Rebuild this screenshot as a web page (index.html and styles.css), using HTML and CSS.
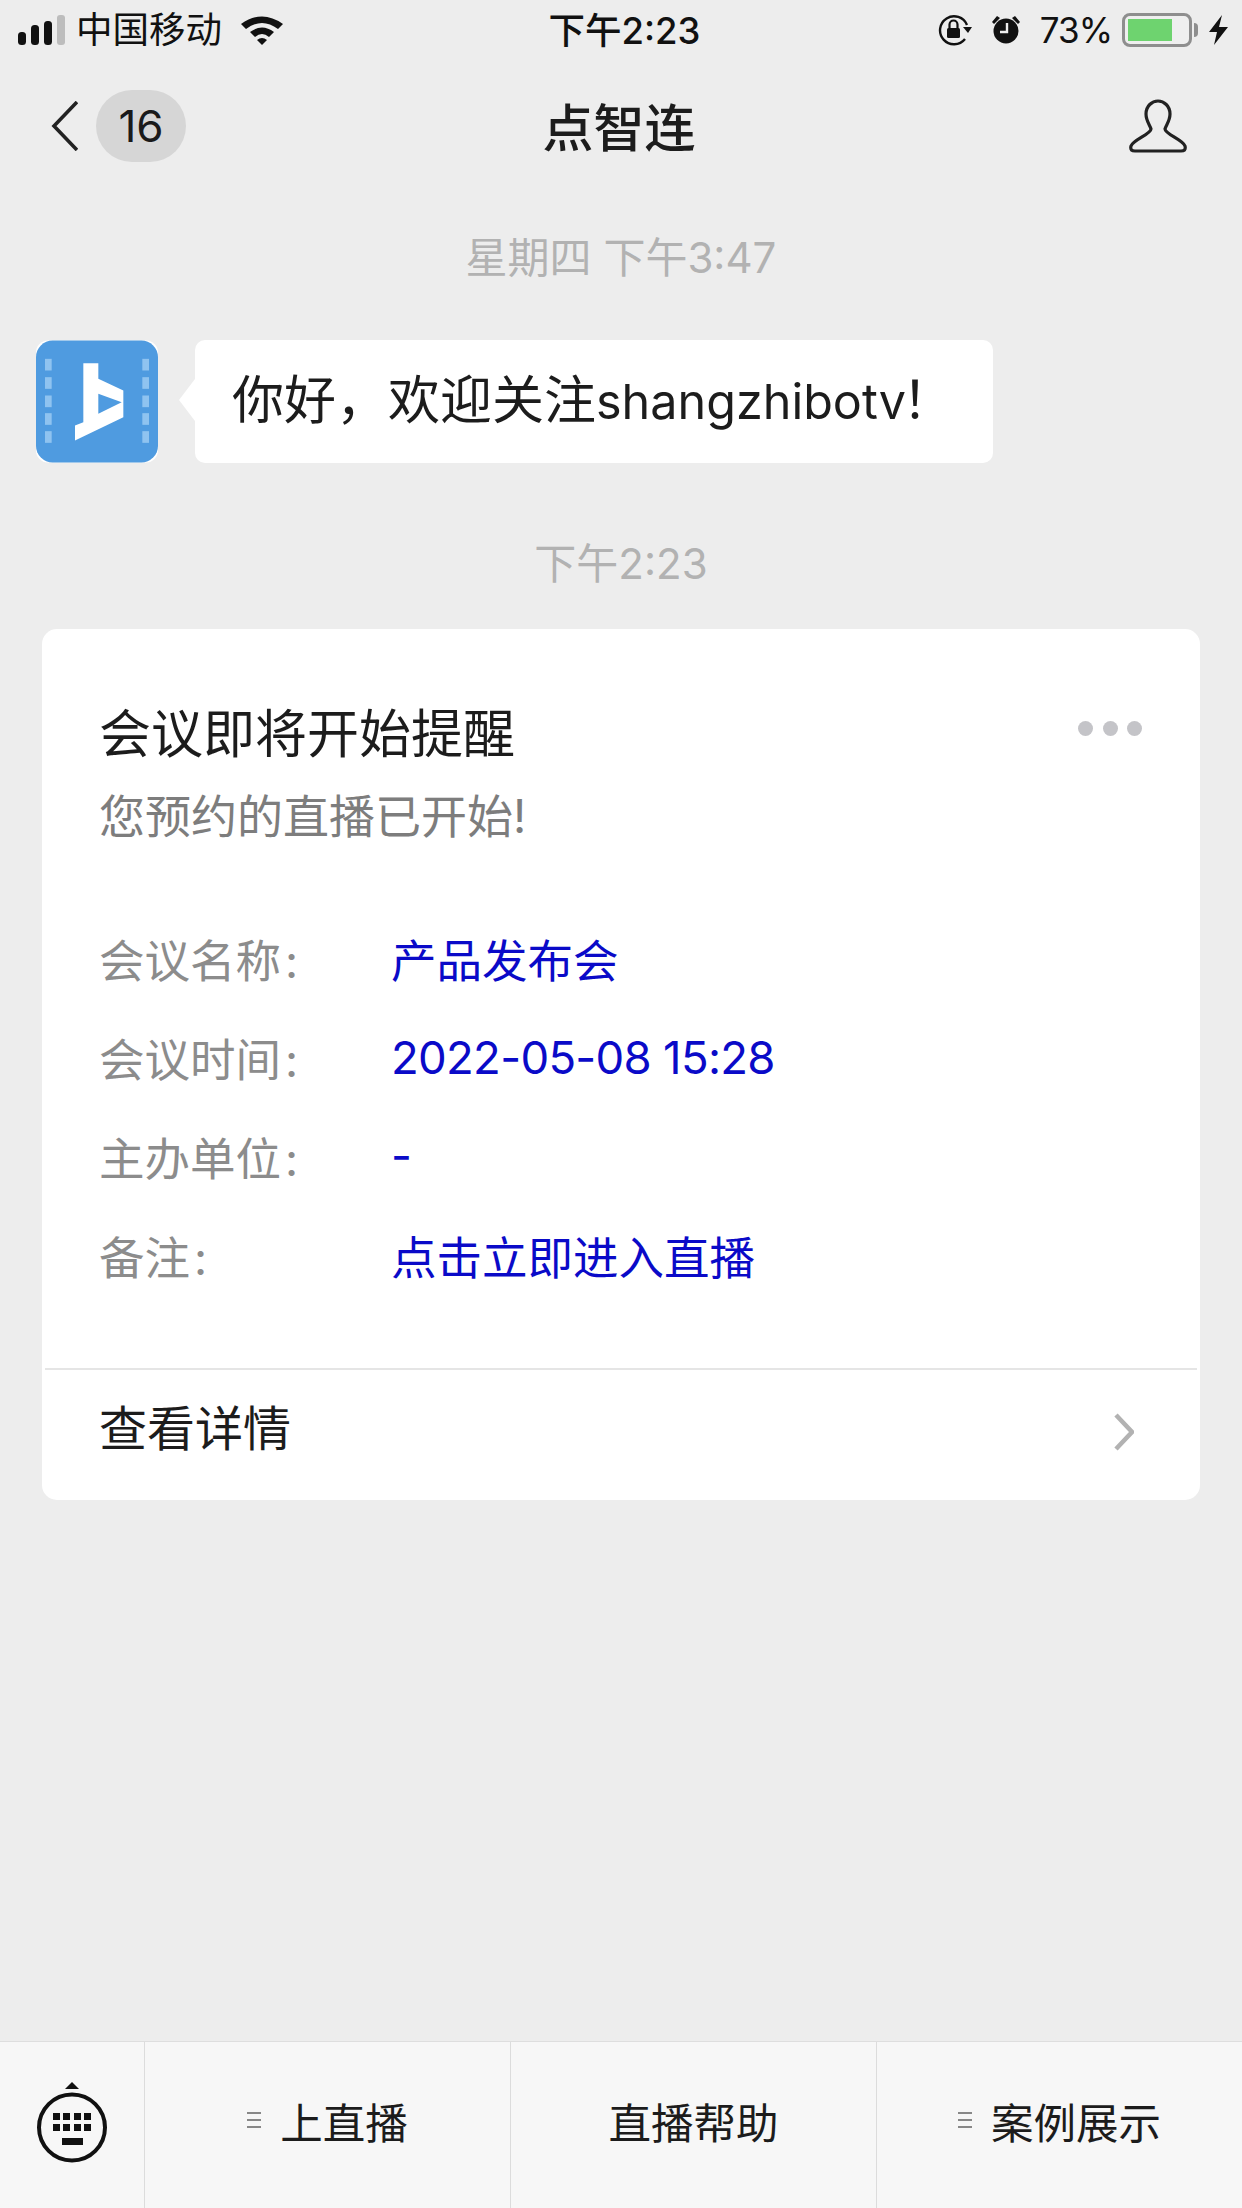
FILE: index.html
```html
<!DOCTYPE html>
<html lang="zh-CN">
<head>
  <meta charset="UTF-8">
  <title>点智连</title>
  <link rel="stylesheet" href="styles.css">
</head>
<body>
<div class="phone">

  <!-- status bar -->
  <div class="status">
    <div class="status-left">
      <svg class="signal" width="48" height="30" viewBox="0 0 48 30">
        <rect x="0" y="17" width="8" height="13" rx="3.5" fill="#111"/>
        <rect x="13" y="10" width="8" height="20" rx="3.5" fill="#111"/>
        <rect x="26" y="6" width="8" height="24" rx="3.5" fill="#111"/>
        <rect x="39" y="0" width="8" height="30" rx="3" fill="#bdbdbd"/>
      </svg>
      <span class="carrier">中国移动</span>
      <svg class="wifi" width="44" height="30" viewBox="0 0 44 30">
        <path d="M1 9 Q22 -6 43 9 L38 14 Q22 2 6 14 Z" fill="#111"/>
        <path d="M10 17 Q22 8 34 17 L29 22 Q22 16 15 22 Z" fill="#111"/>
        <path d="M17 25 Q22 21 27 25 L22 30 Z" fill="#111"/>
      </svg>
    </div>
    <div class="status-time">下午2:23</div>
    <div class="status-right">
      <svg width="34" height="32" viewBox="0 0 34 32">
        <path d="M27 25 A14 14 0 1 1 29 11" fill="none" stroke="#111" stroke-width="2.4"/>
        <path d="M25 13 L34 13 L30 19 Z" fill="#111"/>
        <rect x="9" y="14" width="13" height="10" rx="1.5" fill="#111"/>
        <path d="M11.5 14 V10.5 A4 4 0 0 1 19.5 10.5 V14" fill="none" stroke="#111" stroke-width="2.2"/>
      </svg>
      <svg class="alarm" width="30" height="30" viewBox="0 0 30 30">
        <circle cx="15" cy="16" r="12.5" fill="#111"/>
        <path d="M1 7 L6 1 L9 3 L3 9 Z M29 7 L24 1 L21 3 L27 9 Z" fill="#111"/>
        <path d="M16 8 V17 H9" fill="none" stroke="#eee" stroke-width="2.4"/>
      </svg>
      <span class="percent">73%</span>
      <div class="battery"><div class="battery-fill"></div></div>
      <div class="battery-nub"></div>
      <svg class="bolt" width="19" height="30" viewBox="0 0 19 30">
        <path d="M13 0 L0 17 H8 L5 30 L19 12 H10 Z" fill="#111"/>
      </svg>
    </div>
  </div>

  <!-- nav bar -->
  <div class="nav">
    <div class="nav-left">
      <svg width="27" height="50" viewBox="0 0 27 50">
        <path d="M26 1 L3 25 L26 49" fill="none" stroke="#222" stroke-width="3.6"/>
      </svg>
      <span class="badge">16</span>
    </div>
    <div class="nav-title">点智连</div>
    <svg class="nav-user" width="58" height="54" viewBox="0 0 58 54">
      <path d="M29 2 C23 2 17 7 17 15 C17 22 21 26 22 30 C22 35 4 41 2 47 C1 51 3 52 6 52 H52 C55 52 57 51 56 47 C54 41 36 35 36 30 C37 26 41 22 41 15 C41 7 35 2 29 2 Z" fill="none" stroke="#222" stroke-width="3.2"/>
    </svg>
  </div>

  <div class="chat">
    <div class="time">星期四 下午3:47</div>

    <div class="msg">
      <svg class="avatar" width="122" height="123" viewBox="0 0 366 366">
        <rect width="366" height="366" rx="36" fill="#fff"/>
        <rect width="366" height="366" rx="50" fill="#4f9be0"/>
        <g fill="#8fc3f0">
          <rect x="27" y="55" width="20" height="35"/>
          <rect x="27" y="110" width="20" height="35"/>
          <rect x="27" y="165" width="20" height="35"/>
          <rect x="27" y="218" width="20" height="35"/>
          <rect x="27" y="272" width="20" height="35"/>
          <rect x="319" y="55" width="20" height="35"/>
          <rect x="319" y="110" width="20" height="35"/>
          <rect x="319" y="165" width="20" height="35"/>
          <rect x="319" y="218" width="20" height="35"/>
          <rect x="319" y="272" width="20" height="35"/>
        </g>
        <path d="M142 68 H187 V115 L262 150 V230 L117 300 V255 L142 245 Z" fill="#fff"/>
        <path d="M187 160 L257 185 L187 220 Z" fill="#4f9be0"/>
      </svg>
      <div class="bubble">你好，欢迎关注<span class="latin">shangzhibotv</span>！</div>
    </div>

    <div class="time time-second">下午2:23</div>

    <div class="card">
      <div class="card-body">
        <div class="card-head">
          <div class="card-title">会议即将开始提醒</div>
          <div class="dots"><i></i><i></i><i></i></div>
        </div>
        <div class="card-sub">您预约的直播已开始!</div>
        <div class="fields">
          <div class="field-label">会议名称<span class="colon">:</span></div><div class="field-value">产品发布会</div>
          <div class="field-label">会议时间<span class="colon">:</span></div><div class="field-value field-date">2022-05-08 15:28</div>
          <div class="field-label">主办单位<span class="colon">:</span></div><div class="field-value">-</div>
          <div class="field-label">备注<span class="colon">:</span></div><div class="field-value">点击立即进入直播</div>
        </div>
      </div>
      <div class="card-foot">
        <span>查看详情</span>
        <svg class="foot-arrow" width="20" height="38" viewBox="0 0 20 38">
          <path d="M2 2 L18 19 L2 36" fill="none" stroke="#b2b2b2" stroke-width="4.5"/>
        </svg>
      </div>
    </div>
  </div>

  <!-- bottom menu -->
  <div class="menu">
    <div class="menu-kbd">
      <svg width="74" height="82" viewBox="0 0 74 82">
        <path d="M37 0 L44 7 H30 Z" fill="#111"/>
        <circle cx="37" cy="45.5" r="33" fill="none" stroke="#111" stroke-width="4"/>
        <g fill="#111">
          <rect x="18" y="31" width="7" height="7"/>
          <rect x="28" y="31" width="7" height="7"/>
          <rect x="39" y="31" width="7" height="7"/>
          <rect x="49" y="31" width="7" height="7"/>
          <rect x="18" y="42" width="7" height="7"/>
          <rect x="28" y="42" width="7" height="7"/>
          <rect x="39" y="42" width="7" height="7"/>
          <rect x="49" y="42" width="7" height="7"/>
          <rect x="27" y="56" width="21" height="7"/>
        </g>
      </svg>
    </div>
    <div class="menu-item"><span class="lines"><i></i><i></i><i></i></span>上直播</div>
    <div class="menu-item">直播帮助</div>
    <div class="menu-item"><span class="lines"><i></i><i></i><i></i></span>案例展示</div>
  </div>

</div>
</body>
</html>
```

FILE: styles.css
```css
* { box-sizing: border-box; }
html, body { margin: 0; padding: 0; }
body { font-family: "Inter", "Noto Sans CJK SC", sans-serif; color: #1a1a1a; background: #ededed; }
.phone { width: 1242px; height: 2208px; display: flex; flex-direction: column; overflow: hidden; background: #ededed; }

/* status bar */
.status { height: 60px; flex: none; display: grid; grid-template-columns: 1fr auto 1fr; align-items: center; padding: 0 14px 0 18px; color: #111; }
.status-left { display: flex; align-items: center; }
.carrier { font-size: 36.5px; margin-left: 10px; line-height: 40px; }
.wifi { margin-left: 18px; }
.status-time { font-size: 36.5px; font-weight: 500; padding: 0 0 3px 3px; }
.status-right { display: flex; align-items: center; justify-content: flex-end; }
.alarm { margin-left: 19px; }
.percent { font-size: 35px; margin-left: 19px; letter-spacing: -1px; }
.battery { width: 70px; height: 34px; margin-left: 10px; border: 3px solid #8e8e8e; border-radius: 8px; padding: 3px; background: #efefef; }
.battery-fill { width: 44px; height: 100%; background: #6ed36f; }
.battery-nub { width: 4px; height: 14px; background: #8e8e8e; border-radius: 0 4px 4px 0; margin-left: 2px; }
.bolt { margin-left: 11px; }

/* nav */
.nav { height: 132px; flex: none; display: grid; grid-template-columns: 1fr auto 1fr; align-items: center; padding: 0 55px 0 51px; }
.nav-left { display: flex; align-items: center; gap: 18px; }
.badge { width: 90px; height: 72px; border-radius: 36px; background: #d6d6d6; display: flex; align-items: center; justify-content: center; font-size: 44px; }
.nav-title { font-size: 51px; font-weight: 500; color: #1c1c1c; padding-bottom: 2px; }
.nav-user { display: block; justify-self: end; }

/* chat */
.chat { flex: 1; display: flex; flex-direction: column; padding-top: 40px; }
.time { text-align: center; font-size: 42px; line-height: 52px; color: #b2b2b2; }
.msg { display: flex; align-items: flex-start; margin: 56px 0 0 36px; }
.avatar { display: block; flex: none; }
.bubble { position: relative; margin-left: 37px; width: 798px; height: 123px; background: #fff; border-radius: 10px; font-size: 52px; line-height: 121px; padding-left: 37px; color: #1c1c1c; }
.bubble::before { content: ""; position: absolute; left: -16px; top: 39px; width: 16px; height: 42px; background: #fff; clip-path: polygon(100% 0, 0 50%, 100% 100%); }
.latin { font-size: 48.5px; margin-right: -4px; }
.time-second { margin-top: 75px; }

/* card */
.card { margin: 39px 42px 0; height: 871px; background: #fff; border-radius: 15px; display: flex; flex-direction: column; }
.card-body { flex: 1; padding: 69px 58px 0 57px; }
.card-head { display: flex; align-items: center; justify-content: space-between; height: 64px; }
.card-title { font-size: 52px; color: #1c1c1c; }
.dots { display: flex; gap: 9.5px; margin-top: -4px; }
.dots i { display: block; width: 15px; height: 15px; border-radius: 50%; background: #c4c4c8; }
.card-sub { font-size: 46px; line-height: 64px; margin-top: 22px; color: #7d7d7d; }
.fields { display: grid; grid-template-columns: 292px 1fr; grid-auto-rows: 99px; align-items: center; margin-top: 60px; font-size: 45.5px; }
.field-label { color: #8c8c8c; }
.colon { margin-left: 4px; }
.field-value { color: #0a0ac8; }
.field-date { letter-spacing: -0.7px; padding-top: 2px; }
.card-foot { height: 132px; flex: none; margin: 0 3px; border-top: 2px solid #e5e5e5; display: flex; align-items: center; justify-content: space-between; padding: 0 63px 21px 54px; font-size: 48px; color: #1c1c1c; }
.foot-arrow { margin-top: 15px; }

/* bottom menu */
.menu { height: 167px; flex: none; display: grid; grid-template-columns: 144px 366px 366px 366px; background: #f7f7f7; border-top: 1px solid #dedede; }
.menu-kbd { display: flex; justify-content: center; padding-top: 40px; }
.menu-item { display: flex; align-items: center; justify-content: center; gap: 19px; font-size: 42.5px; padding-bottom: 10px; border-left: 1px solid #dcdcdc; color: #1c1c1c; }
.lines { display: flex; flex-direction: column; gap: 5px; width: 14px; }
.lines i { display: block; height: 2px; background: #888; }
```
